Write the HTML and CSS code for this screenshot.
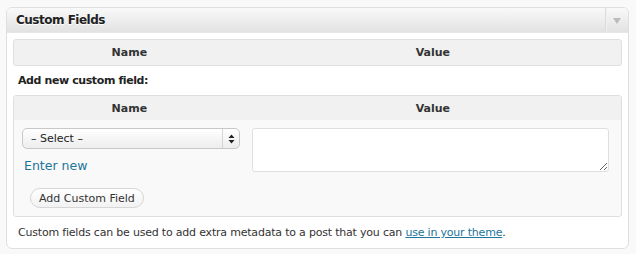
FILE: index.html
```html
<!DOCTYPE html>
<html>
<head>
<meta charset="utf-8">
<link rel="stylesheet" href="styles.css">
</head>
<body>
<div class="postbox">
  <div class="hndle-row">
    <h3 class="hndle">Custom Fields</h3>
    <div class="handlediv"><span class="tri"></span></div>
  </div>
  <div class="inside">
    <div class="thead list-head">
      <div class="col-name">Name</div>
      <div class="col-value">Value</div>
    </div>
    <p class="addnew">Add new custom field:</p>
    <div class="newmeta">
      <div class="thead">
        <div class="col-name">Name</div>
        <div class="col-value">Value</div>
      </div>
      <div class="tbody">
        <div class="left">
          <div class="fake-select">
            <span class="sel-text">– Select –</span>
            <span class="sel-arrows">
              <svg width="7" height="10" viewBox="0 0 7 10"><path d="M3.5 0.5 L6.5 4 L0.5 4 Z M0.5 6 L6.5 6 L3.5 9.5 Z" fill="#222"/></svg>
            </span>
          </div>
          <a class="enternew" href="#">Enter new</a>
          <button class="addbtn" type="button">Add Custom Field</button>
        </div>
        <div class="right">
          <textarea class="metavalue"></textarea>
        </div>
      </div>
    </div>
    <p class="help">Custom fields can be used to add extra metadata to a post that you can <a href="#">use in your theme</a>.</p>
  </div>
</div>
</body>
</html>
```

FILE: styles.css
```css
html, body {
  margin: 0;
  padding: 0;
  background: #f9f9f9;
}
body {
  padding: 7px 7px 0 6px;
  font-family: "DejaVu Sans", "Lucida Grande", Verdana, sans-serif;
  color: #333;
}
.postbox {
  background: #fff;
  border: 1px solid #dfdfdf;
  border-radius: 6px;
  overflow: hidden;
}
.hndle-row {
  display: flex;
  height: 25px;
  box-sizing: border-box;
  background: linear-gradient(to bottom, #f9f9f9, #e2e2e2);
  border-bottom: 1px solid #e6e6e6;
}
.hndle {
  flex: 1;
  margin: 0;
  padding: 0 0 0 9px;
  font-size: 12px;
  letter-spacing: -0.5px;
  font-weight: bold;
  line-height: 24px;
  color: #222;
  text-shadow: 0 1px 0 #fff;
}
.handlediv {
  width: 22px;
  border-left: 1px solid #dcdcdc;
  box-shadow: inset 1px 0 0 #f0f0f0;
  display: flex;
  align-items: center;
  justify-content: center;
}
.tri {
  width: 0;
  height: 0;
  border-left: 4px solid transparent;
  border-right: 4px solid transparent;
  border-top: 6px solid #bbb;
  margin-top: 1px;
}
.inside {
  padding: 6px 6px 0 6px;
}
.thead {
  display: flex;
  height: 25px;
  align-items: center;
  background: #f1f1f1;
  font-size: 11px;
  font-weight: bold;
  color: #333;
}
.list-head {
  border: 1px solid #dfdfdf;
  border-radius: 3px;
}
.col-name {
  width: 38%;
  text-align: center;
}
.col-value {
  flex: 1;
  text-align: center;
}
.addnew {
  margin: 0;
  height: 29px;
  line-height: 29px;
  padding-left: 5px;
  font-size: 11px;
  letter-spacing: -0.4px;
  font-weight: bold;
  color: #222;
}
.newmeta {
  border: 1px solid #dfdfdf;
  border-radius: 3px;
  background: #f9f9f9;
  overflow: hidden;
}
.newmeta .thead {
  height: 24px;
}
.tbody {
  display: flex;
  padding: 8px 0 8px 0;
  height: 80px;
  box-sizing: content-box;
}
.left {
  width: 38%;
  padding-left: 8px;
  box-sizing: border-box;
  display: flex;
  flex-direction: column;
  align-items: flex-start;
}
.right {
  flex: 1;
  padding-left: 7px;
  padding-right: 12px;
}
.fake-select {
  width: 218px;
  height: 21px;
  box-sizing: border-box;
  border: 1px solid #c8c8c8;
  border-radius: 5px;
  background: linear-gradient(to bottom, #ffffff, #ededed);
  display: flex;
  align-items: center;
  font-size: 11px;
  color: #222;
}
.sel-text {
  flex: 1;
  padding-left: 8px;
}
.sel-arrows {
  width: 16px;
  height: 100%;
  border-left: 1px solid #d5d5d5;
  display: flex;
  align-items: center;
  justify-content: center;
}
.enternew {
  margin-top: 9px;
  margin-left: 2px;
  font-size: 12.5px;
  color: #21759b;
  text-decoration: none;
}
.addbtn {
  margin-top: 15px;
  margin-left: 8px;
  height: 20px;
  padding: 0 8px;
  font-family: inherit;
  font-size: 11px;
  color: #333;
  border: 1px solid #d6d6d6;
  border-radius: 11px;
  background: linear-gradient(to bottom, #ffffff, #f2f2f2);
}
.metavalue {
  display: block;
  width: 100%;
  height: 44px;
  box-sizing: border-box;
  border: 1px solid #dfdfdf;
  border-radius: 3px;
  background: #fff;
  resize: both;
  margin: 0;
}
.help {
  margin: 0;
  padding: 9px 0 0 5px;
  height: 31px;
  box-sizing: border-box;
  font-size: 11px;
  letter-spacing: -0.2px;
  color: #333;
}
.help a {
  color: #21759b;
}
```
